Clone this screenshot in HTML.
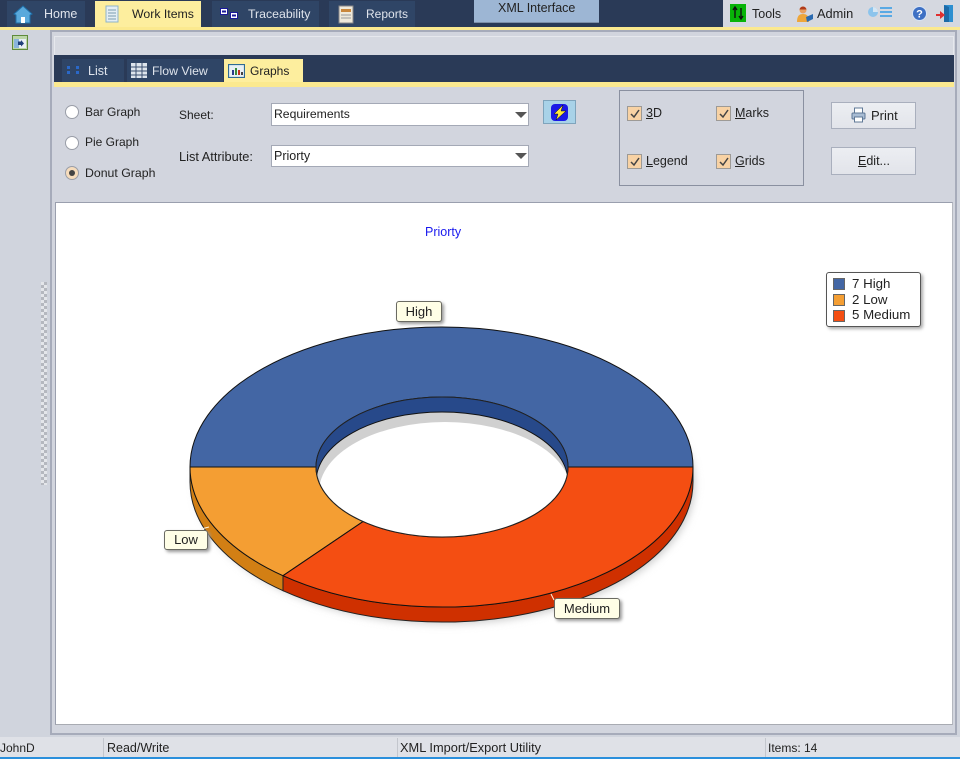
<!DOCTYPE html>
<html><head><meta charset="utf-8"><style>
html,body{margin:0;padding:0}
body{width:960px;height:759px;overflow:hidden;background:#d0d4dd;position:relative;font-family:"Liberation Sans",sans-serif;color:#222}
div,svg{position:absolute}
#w{left:0;top:0;width:960px;height:759px;overflow:hidden;background:#d0d4dd;filter:blur(.35px)}
.t{position:absolute;white-space:nowrap;font-size:12.5px;line-height:16px;height:16px}
.s{font-size:12px}
.tab{background:#2f4566;height:26px;top:1px}
.rad{width:12px;height:12px;border:1px solid #9a9ea8;border-radius:50%;background:#fff;left:65px}
.cb{width:13px;height:13px;background:#f8d2a4;border:1px solid #9d9a96}
.btn{background:linear-gradient(#eceef2,#e2e4ea);border:1px solid #a9afbd;box-sizing:border-box;left:831px;width:85px}
.combo{left:271px;width:258px;background:#fff;border:1px solid #a4a9b6;box-sizing:border-box}
.arr{width:0;height:0;border-left:6px solid transparent;border-right:6px solid transparent;border-top:6px solid #555}
.lab{background:#fffee6;border:1px solid #6a6a62;border-radius:3px;box-sizing:border-box;box-shadow:2px 2px 3px #999;font-size:13px;line-height:19px;text-align:center;color:#222}
.sw{left:833px;width:10px;height:10px;border:1px solid #666}
u{text-decoration:underline}
</style></head><body>
<div id="w">

<!-- top bar -->
<div style="left:0;top:0;width:960px;height:27px;background:#2a3a57"></div>
<div style="left:0;top:27px;width:960px;height:3px;background:#fbe98f"></div>
<div style="left:723px;top:0;width:237px;height:27px;background:#d5d8e0"></div>
<div class="tab" style="left:7px;width:78px"></div>
<div class="tab" style="left:95px;width:106px;background:#fdee9e"></div>
<div class="tab" style="left:212px;width:107px"></div>
<div class="tab" style="left:329px;width:86px"></div>
<div style="left:474px;top:0;width:125px;height:22px;background:#9db6d4;border-bottom:1px solid #7d8fa8"></div>

<svg style="left:13px;top:4px" width="20" height="20" viewBox="0 0 20 20"><path d="M1 10 10 2l9 8-2 1v8H3v-8z" fill="#5aa9dc" stroke="#1f6fa8"/><path d="M8 19v-6h4v6z" fill="#fff"/></svg>
<div class="t" style="left:44px;top:6px;color:#dfe4ec">Home</div>

<svg style="left:105px;top:5px" width="14" height="18" viewBox="0 0 14 18"><rect x="1" y="1" width="12" height="16" fill="#e4eef4" stroke="#8fb4c8"/><path d="M3 5h8M3 8h8M3 11h8M3 14h8" stroke="#7a9cb0"/></svg>
<div class="t" style="left:132px;top:6px;color:#222;font-size:12.3px">Work Items</div>

<svg style="left:220px;top:8px" width="18" height="11" viewBox="0 0 18 11"><rect x="0.5" y="0.5" width="7" height="6" fill="#fff" stroke="#1a1a9a"/><rect x="10.5" y="4.5" width="7" height="6" fill="#fff" stroke="#1a1a9a"/><path d="M2 3.5h4M12 7.5h4" stroke="#1a1a9a" stroke-width="2"/></svg>
<div class="t" style="left:248px;top:6px;color:#dfe4ec;font-size:12.3px">Traceability</div>

<svg style="left:338px;top:5px" width="16" height="19" viewBox="0 0 16 19"><rect x="1" y="1" width="14" height="17" fill="#efe9da" stroke="#888"/><rect x="3" y="4" width="10" height="3" fill="#c9873c"/><path d="M3 10h10M3 13h10" stroke="#999"/></svg>
<div class="t s" style="left:366px;top:6px;color:#dfe4ec">Reports</div>

<div class="t" style="left:498px;top:0;color:#222">XML Interface</div>

<svg style="left:730px;top:4px" width="16" height="18" viewBox="0 0 16 18"><rect width="16" height="18" fill="#08b408"/><path d="M5 14V3M3 6l2-3 2 3M11 4v11M9 12l2 3 2-3" stroke="#111" stroke-width="1.4" fill="none"/></svg>
<div class="t" style="left:752px;top:6px">Tools</div>
<svg style="left:796px;top:5px" width="18" height="18" viewBox="0 0 18 18"><circle cx="7" cy="5" r="3.5" fill="#e8a060"/><path d="M7 1.500a3.500 3.500 0 0 1 3.500 3H3.500a3.500 3.500 0 0 1 3.500-3z" fill="#b03a1a"/><path d="M1 17c0-6 2-8 6-8s6 2 6 8z" fill="#eea63a"/><path d="M10 12l7-3v5l-6 3z" fill="#2a6ab0"/></svg>
<div class="t" style="left:817px;top:6px;font-size:12.8px">Admin</div>
<svg style="left:867px;top:6px" width="26" height="14" viewBox="0 0 26 14"><circle cx="6" cy="6" r="5" fill="#8cc4ec"/><path d="M6 6V1a5 5 0 0 1 5 5z" fill="#d5e6f3"/><path d="M13 2h12M13 6h12M13 10h12" stroke="#59a9e4" stroke-width="2"/></svg>
<svg style="left:912px;top:6px" width="15" height="15" viewBox="0 0 15 15"><circle cx="7.500" cy="7.500" r="7" fill="#3e70c4" stroke="#d8e4f4"/><text x="7.500" y="11.500" text-anchor="middle" font-size="11" font-weight="bold" fill="#fff" font-family="Liberation Sans">?</text></svg>
<svg style="left:936px;top:4px" width="18" height="19" viewBox="0 0 18 19"><rect x="8" y="1" width="9" height="17" fill="#2d8fd0"/><path d="M8 1l5 2v15H8z" fill="#1b6aa8"/><path d="M0 10h4V7l5 4-5 4v-3H0z" fill="#e03030"/></svg>

<!-- left panel -->
<svg style="left:12px;top:35px" width="16" height="15" viewBox="0 0 16 15"><rect x="0.500" y="0.500" width="15" height="14" fill="#bcd6a8" stroke="#5f8a3a"/><rect x="2" y="4" width="12" height="9" fill="#e8eef4"/><rect x="2" y="4" width="5" height="9" fill="#8ab4dc"/><path d="M6 6.500h3V5l3 3.500-3 3V10H6z" fill="#1f3f7a"/></svg>
<div style="left:41px;top:282px;width:6px;height:203px;background:repeating-conic-gradient(#b5b8bf 0 25%,#e4e6ea 0 50%) 0 0/6px 6px"></div>

<!-- main panel -->
<div style="left:50px;top:30px;width:907px;height:705px;background:#d2d5de;border:2px solid #a6abba;box-sizing:border-box"></div>
<div style="left:54px;top:36px;width:900px;height:20px;background:#d6d9e1;border:1px solid #e6e8ed;border-bottom:0;box-sizing:border-box"></div>
<div style="left:54px;top:55px;width:900px;height:27px;background:#2a3a57"></div>
<div style="left:54px;top:82px;width:900px;height:5px;background:#fbe98f"></div>
<div style="left:62px;top:59px;width:62px;height:23px;background:#2f4566"></div>
<div style="left:127px;top:59px;width:96px;height:23px;background:#2f4566"></div>
<div style="left:224px;top:59px;width:79px;height:23px;background:#fdee9e"></div>
<svg style="left:66px;top:65px" width="15" height="10" viewBox="0 0 15 10"><path d="M1 1h3v3H1zM1 6h3v3H1zM10 1h3v3h-3zM10 6h3v3h-3z" fill="#2a68c8"/></svg>
<div class="t" style="left:88px;top:63px;color:#dfe4ec">List</div>
<svg style="left:131px;top:63px" width="16" height="15" viewBox="0 0 16 15"><rect width="16" height="15" fill="#dde4ec"/><path d="M5 0v15M11 0v15M0 4h16M0 8h16M0 12h16" stroke="#3a4f70"/></svg>
<div class="t" style="left:152px;top:63px;color:#dfe4ec;font-size:12.3px">Flow View</div>
<svg style="left:228px;top:64px" width="17" height="14" viewBox="0 0 17 14"><rect x="0.500" y="0.500" width="16" height="13" fill="#e8f0f4" stroke="#2f6b94" stroke-width="1.200"/><rect x="4" y="6" width="2" height="5" fill="#2a3a8a"/><rect x="7" y="4" width="2" height="7" fill="#3a8a3a"/><rect x="10" y="6" width="2" height="5" fill="#c03020"/><rect x="13" y="8" width="2" height="3" fill="#444"/></svg>
<div class="t s" style="left:250px;top:63px;color:#222">Graphs</div>

<!-- controls -->
<div class="rad" style="top:105px"></div>
<div class="rad" style="top:136px"></div>
<div class="rad" style="top:166px;background:#f6dcbc"></div>
<div style="left:69px;top:170px;width:6px;height:6px;border-radius:50%;background:#444"></div>
<div class="t s" style="left:85px;top:104px">Bar Graph</div>
<div class="t s" style="left:85px;top:134px">Pie Graph</div>
<div class="t" style="left:85px;top:165px;font-size:12.3px">Donut Graph</div>
<div class="t s" style="left:179px;top:107px">Sheet:</div>
<div class="t" style="left:179px;top:149px;font-size:12.8px">List Attribute:</div>
<div class="combo" style="top:103px;height:23px"></div>
<div class="combo" style="top:145px;height:22px"></div>
<div class="t" style="left:274px;top:106px;font-size:12.2px">Requirements</div>
<div class="t" style="left:274px;top:148px">Priorty</div>
<div class="arr" style="left:515px;top:112px"></div>
<div class="arr" style="left:515px;top:153px"></div>
<div style="left:543px;top:100px;width:33px;height:24px;background:#a8d2e8;border:1px solid #7fa4bc;box-sizing:border-box"></div>
<svg style="left:551px;top:104px" width="17" height="17" viewBox="0 0 17 17"><rect width="17" height="17" rx="4" fill="#1a1ae6"/><path d="M12 1 3 10h4l-2 6 10-9h-5z" fill="#ffe93a" stroke="#111" stroke-width=".5"/></svg>

<div style="left:619px;top:90px;width:185px;height:96px;border:1px solid #8a90a0;box-sizing:border-box"></div>
<div class="cb" style="left:627px;top:106px"></div>
<div class="cb" style="left:716px;top:106px"></div>
<div class="cb" style="left:627px;top:154px"></div>
<div class="cb" style="left:716px;top:154px"></div>
<svg style="left:627px;top:106px" width="104" height="63" viewBox="0 0 104 63"><path d="M4 8l3 3 5-7M93 8l3 3 5-7M4 56l3 3 5-7M93 56l3 3 5-7" fill="none" stroke="#444" stroke-width="1.500"/></svg>
<div class="t" style="left:646px;top:105px"><u>3</u>D</div>
<div class="t" style="left:735px;top:105px"><u>M</u>arks</div>
<div class="t" style="left:646px;top:153px"><u>L</u>egend</div>
<div class="t" style="left:735px;top:153px"><u>G</u>rids</div>
<div class="btn" style="top:102px;height:27px"></div>
<div class="btn" style="top:147px;height:28px"></div>
<svg style="left:851px;top:107px" width="15" height="16" viewBox="0 0 15 16"><rect x="3.500" y="1" width="8" height="5" fill="#fff" stroke="#5f7896"/><rect x="1" y="6" width="13" height="6" rx="1" fill="#a9bdd4" stroke="#5f7896"/><rect x="3.500" y="10" width="8" height="5" fill="#fff" stroke="#5f7896"/></svg>
<div class="t" style="left:871px;top:108px;font-size:13px">Print</div>
<div class="t" style="left:858px;top:153px"><u>E</u>dit...</div>

<!-- graph area -->
<div style="left:55px;top:202px;width:898px;height:523px;background:#fff;border:1px solid #9a9fae;border-right-color:#b5b8bf;border-bottom-color:#a8abb2;box-sizing:border-box"></div>
<div class="t" style="left:425px;top:224px;color:#1a1aee;font-size:12.5px">Priorty</div>

<svg style="left:0;top:0" width="960" height="759" viewBox="0 0 960 759">
<defs>
<filter id="bl" x="-20%" y="-20%" width="140%" height="140%"><feGaussianBlur stdDeviation="4"/></filter>
<clipPath id="hole"><ellipse cx="442" cy="467" rx="126" ry="70"/></clipPath>
</defs>
<!-- soft shadow -->
<ellipse cx="445" cy="484" rx="250" ry="140" fill="#ccc" filter="url(#bl)"/>
<!-- side walls -->
<path d="M190 467v15A251.500 140 0 0 0 283 590.700V575.700A251.500 140 0 0 1 190 467z" fill="#d27f14" stroke="#222" stroke-width="1"/>
<path d="M283 575.700v15A251.500 140 0 0 0 693 482V467A251.500 140 0 0 1 283 575.700z" fill="#cf3000" stroke="#222" stroke-width="1"/>
<!-- top faces -->
<path d="M190 467A251.500 140 0 0 1 693 467H568A126 70 0 0 0 316 467z" fill="#4366a4" stroke="#111" stroke-width="1"/>
<path d="M190 467H316A126 70 0 0 0 363 521.600L283 575.700A251.500 140 0 0 1 190 467z" fill="#f49e33" stroke="#111" stroke-width="1"/>
<path d="M693 467H568A126 70 0 0 1 363 521.600L283 575.700A251.500 140 0 0 0 693 467z" fill="#f44e12" stroke="#111" stroke-width="1"/>
<!-- hole -->
<g clip-path="url(#hole)">
<rect x="310" y="390" width="265" height="150" fill="#27498a"/>
<ellipse cx="442" cy="482" rx="126" ry="70" fill="#d0d0d0" stroke="#111"/>
<ellipse cx="445" cy="492" rx="126" ry="70" fill="#fff"/>
</g>
<ellipse cx="442" cy="467" rx="126" ry="70" fill="none" stroke="#222" stroke-width="1"/>
<path d="M209 527l-8 2M551 594l3 6" stroke="#fff3dd" stroke-width="1"/>
</svg>

<div class="lab" style="left:396px;top:301px;width:46px;height:21px">High</div>
<div class="lab" style="left:164px;top:530px;width:44px;height:20px;line-height:18px">Low</div>
<div class="lab" style="left:554px;top:598px;width:66px;height:21px">Medium</div>

<!-- legend -->
<div style="left:826px;top:272px;width:95px;height:55px;background:#fff;border:1.5px solid #555;border-radius:3px;box-sizing:border-box;box-shadow:2px 2px 3px #aaa"></div>
<div class="sw" style="top:278px;background:#4366a4"></div>
<div class="sw" style="top:294px;background:#f49e33"></div>
<div class="sw" style="top:310px;background:#f44e12"></div>
<div class="t" style="left:852px;top:276px;font-size:13.3px">7 High</div>
<div class="t" style="left:852px;top:292px;font-size:13.3px">2 Low</div>
<div class="t" style="left:852px;top:307px;font-size:13.3px">5 Medium</div>

<!-- status -->
<div style="left:0;top:737px;width:960px;height:20px;background:#dfe1e7"></div>
<div style="left:0;top:757px;width:960px;height:2px;background:#2a8fdc"></div>
<div style="left:103px;top:738px;width:1px;height:19px;background:#c3c6cd"></div>
<div style="left:397px;top:738px;width:1px;height:19px;background:#c3c6cd"></div>
<div style="left:765px;top:738px;width:1px;height:19px;background:#c3c6cd"></div>
<div class="t s" style="left:0;top:740px">JohnD</div>
<div class="t" style="left:107px;top:740px">Read/Write</div>
<div class="t" style="left:400px;top:740px;font-size:12.8px">XML Import/Export Utility</div>
<div class="t s" style="left:768px;top:740px">Items: 14</div>
</div>
</body></html>
